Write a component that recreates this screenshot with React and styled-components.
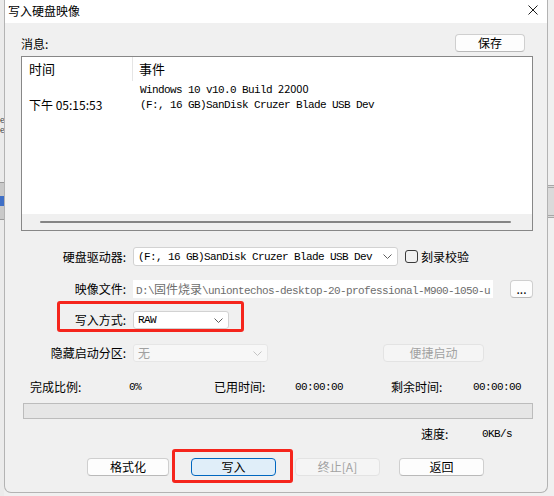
import React from 'react';
import styled, { createGlobalStyle } from 'styled-components';

const GlobalStyle = createGlobalStyle`
    html, body {
        margin: 0;
        padding: 0;
    }
    body {
        background: #f0f0f0;
        font-family: "Noto Sans CJK SC", "Liberation Sans", sans-serif;
        color: #000000;
    }
`;

const MONO = `"Liberation Mono", "Noto Sans CJK SC", monospace`;

const Desktop = styled.div`
    width: 554px;
    height: 496px;
    display: flex;
    overflow: hidden;
    background: #f0f0f0;
`;

const LeftPeek = styled.div`
    width: 4px;
    flex: none;
    background: #ebebeb;
    display: flex;
    flex-direction: column;
    overflow: hidden;
`;

const PeekText = styled.div`
    height: 8px;
    font-size: 8px;
    line-height: 8px;
    color: #333333;
    white-space: nowrap;
    &:first-child {
        margin-top: 116px;
    }
    & + & {
        margin-top: 2px;
    }
`;

const PeekIcon = styled.div`
    margin-top: 48px;
    height: 36px;
    background: #c9c9c9;
    border-top: 1px solid #9a9a9a;
    border-bottom: 1px solid #9a9a9a;
    display: flex;
    align-items: center;

    &::before {
        content: '';
        width: 4px;
        height: 10px;
        background: #3f6fc6;
    }
`;

const RightPeek = styled.div`
    width: 6px;
    flex: none;
    background: #f0f0f0;
    display: flex;
    flex-direction: column;
`;

const PeekBar = styled.div`
    margin-top: 185px;
    height: 33px;
    box-sizing: border-box;
    border-top: 3px double #a7a7a7;
    border-bottom: 3px double #a7a7a7;
    background: #dadada;
`;

const Window = styled.div`
    width: 544px;
    height: 493px;
    flex: none;
    box-sizing: border-box;
    border: 1px solid #b3b3b3;
    border-top: none;
    border-radius: 0 0 7px 7px;
    background: #f0f0f0;
    display: flex;
    flex-direction: column;
    overflow: hidden;
`;

const TitleBar = styled.div`
    height: 23px;
    flex: none;
    background: #ffffff;
    display: flex;
    align-items: flex-start;
    justify-content: space-between;
    padding: 2px 9px 0 3px;
    box-sizing: border-box;
`;

const Title = styled.div`
    font-size: 12px;
    line-height: 17px;
`;

const CloseIcon = styled.div`
    margin-top: 3px;
    width: 10px;
    height: 10px;
    display: flex;
`;

const Body = styled.div`
    flex: 1;
    display: flex;
    flex-direction: column;
    padding: 11px 14px 0 16px;
`;

const Toolbar = styled.div`
    height: 18px;
    display: flex;
    align-items: flex-end;
    justify-content: space-between;
`;

const Caption = styled.div`
    font-size: 12px;
    line-height: 16px;
`;

const Button = styled.div`
    width: ${p => p.$w}px;
    height: 18px;
    flex: none;
    box-sizing: border-box;
    display: flex;
    align-items: center;
    justify-content: center;
    font-size: 12px;
    line-height: 16px;
    border-radius: 4px;
    border: 1px solid ${p => (p.$primary ? '#0067c0' : p.$disabled ? '#e3e3e3' : '#cfcfcf')};
    border-bottom-color: ${p => (p.$primary ? '#0067c0' : p.$disabled ? '#e3e3e3' : '#b9b9b9')};
    background: ${p => (p.$primary ? '#e0eef9' : p.$disabled ? '#f5f5f5' : '#fdfdfd')};
    color: ${p => (p.$disabled ? '#a2a2a2' : '#000000')};
    margin-left: ${p => p.$ml || 0}px;
    margin-right: ${p => p.$mr || 0}px;
`;

const LogList = styled.div`
    margin-top: 4px;
    height: 175px;
    flex: none;
    box-sizing: border-box;
    border: 1px solid #878787;
    background: #ffffff;
    display: flex;
    flex-direction: column;
`;

const LogHeader = styled.div`
    height: 24px;
    display: flex;
`;

const HeadCell = styled.div`
    box-sizing: border-box;
    width: ${p => (p.$w ? `${p.$w}px` : 'auto')};
    flex: ${p => (p.$w ? 'none' : '1')};
    padding-left: ${p => (p.$w ? 7 : 6)}px;
    border-right: ${p => (p.$w ? '1px solid #e5e5e5' : 'none')};
    font-size: 13px;
    line-height: 24px;
`;

const LogRows = styled.div`
    flex: 1;
`;

const LogRow = styled.div`
    height: 16px;
    display: flex;
    align-items: center;
`;

const TimeCell = styled.div`
    width: 111px;
    flex: none;
    box-sizing: border-box;
    padding-left: 7px;
    font-size: 12px;
    line-height: 16px;
`;

const EventCell = styled.div`
    padding-left: 7px;
    font-family: ${MONO};
    font-size: 11px;
    letter-spacing: -0.6px;
    line-height: 16px;
    white-space: nowrap;
`;

const SansNum = styled.span`
    font-family: "Noto Sans CJK SC", sans-serif;
    font-size: 11px;
    letter-spacing: 0;
`;

const HScroll = styled.div`
    height: 16px;
    flex: none;
    background: #f0f0f0;
    display: flex;
    align-items: center;
`;

const Thumb = styled.div`
    margin-left: 18px;
    width: 471px;
    height: 2px;
    border-radius: 1px;
    background: #858585;
`;

const FormRow = styled.div`
    margin-top: ${p => p.$mt}px;
    height: ${p => p.$h || 18}px;
    flex: none;
    display: flex;
    align-items: center;
`;

const FieldLabel = styled.div`
    width: 105px;
    flex: none;
    margin-right: 7px;
    text-align: right;
    font-size: 12px;
    line-height: 16px;
    white-space: nowrap;
`;

const Combo = styled.div`
    width: ${p => p.$w}px;
    height: 100%;
    flex: none;
    box-sizing: border-box;
    border: 1px solid ${p => (p.$disabled ? '#e6e6e6' : '#d2d2d2')};
    border-radius: 3px;
    background: ${p => (p.$disabled ? '#f7f7f7' : '#ffffff')};
    display: flex;
    align-items: center;
    justify-content: space-between;
    padding: 0 5px 0 4px;
`;

const ComboText = styled.span`
    font-family: ${p => (p.$cjk ? '"Noto Sans CJK SC", sans-serif' : MONO)};
    font-size: ${p => (p.$cjk ? 12 : 11)}px;
    letter-spacing: ${p => (p.$cjk ? 0 : -0.6)}px;
    line-height: 16px;
    color: ${p => (p.$disabled ? '#a0a0a0' : '#000000')};
    white-space: nowrap;
`;

const CheckBox = styled.div`
    width: 13px;
    height: 13px;
    flex: none;
    box-sizing: border-box;
    margin-left: 7px;
    border: 1px solid #3a3a3a;
    border-radius: 3px;
`;

const CheckLabel = styled.div`
    margin-left: 3px;
    font-size: 12px;
    line-height: 16px;
`;

const PathField = styled.div`
    width: 360px;
    height: 100%;
    flex: none;
    box-sizing: border-box;
    background: #ffffff;
    padding-left: 3px;
    overflow: hidden;
    white-space: nowrap;
    font-family: ${MONO};
    font-size: 11px;
    letter-spacing: -0.6px;
    line-height: 18px;
    color: #6d6d6d;
`;

const CjkRun = styled.span`
    font-family: "Noto Sans CJK SC", sans-serif;
    font-size: 12px;
    letter-spacing: 0;
`;

const Highlight = styled.div`
    position: relative;
    display: flex;
    align-items: center;
    height: 100%;
    margin-left: ${p => p.$ml || 0}px;

    &::after {
        content: '';
        position: absolute;
        top: ${p => p.$box[0]}px;
        right: ${p => p.$box[1]}px;
        bottom: ${p => p.$box[2]}px;
        left: ${p => p.$box[3]}px;
        border: 3px solid #f5251c;
        border-radius: 3px;
        pointer-events: none;
    }
`;

const StatsRow = styled.div`
    margin-top: 17px;
    margin-left: 9px;
    height: 16px;
    display: grid;
    grid-template-columns: 99px 85px 81px 96px 82px auto;
    align-items: center;
`;

const StatLabel = styled.div`
    font-size: 12px;
    line-height: 16px;
`;

const StatValue = styled.div`
    font-family: ${MONO};
    font-size: 11px;
    letter-spacing: -0.6px;
    line-height: 16px;
`;

const Progress = styled.div`
    margin-top: 8px;
    margin-left: 2px;
    width: 510px;
    height: 16px;
    box-sizing: border-box;
    border: 1px solid #bcbcbc;
    background: #e6e6e6;
`;

const SpeedRow = styled.div`
    margin-top: 8px;
    height: 14px;
    display: flex;
    align-items: center;
    justify-content: flex-end;
    padding-right: 21px;
`;

const SpeedLabel = styled(StatLabel)`
    width: 61px;
`;

const ButtonRow = styled.div`
    margin-top: 17px;
    height: 18px;
    display: flex;
    gap: 19px;
    padding-left: 66px;
`;

const Chevron = ({ color = '#5f5f5f' }) => (
    <svg width="9" height="5" viewBox="0 0 9 5">
        <path d="M0.5 0.5 L4.5 4.5 L8.5 0.5" fill="none" stroke={color} strokeWidth="1" />
    </svg>
);

const logRows = [
    { time: '', event: <>Windows 10 v10.0 Build <SansNum>22000</SansNum></> },
    { time: '下午 05:15:53', event: '(F:, 16 GB)SanDisk Cruzer Blade USB Dev' },
];

const App = () => {
    return (
        <Desktop>
            <GlobalStyle />
            <LeftPeek>
                <PeekText>e:</PeekText>
                <PeekText>e:</PeekText>
                <PeekIcon />
            </LeftPeek>
            <Window>
                <TitleBar>
                    <Title>写入硬盘映像</Title>
                    <CloseIcon>
                        <svg width="10" height="10" viewBox="0 0 10 10">
                            <path d="M0.5 0.5 L9.5 9.5 M9.5 0.5 L0.5 9.5" stroke="#1c1c1c" strokeWidth="1" />
                        </svg>
                    </CloseIcon>
                </TitleBar>
                <Body>
                    <Toolbar>
                        <Caption>消息:</Caption>
                        <Button $w={70} $mr={8}>保存</Button>
                    </Toolbar>
                    <LogList>
                        <LogHeader>
                            <HeadCell $w={111}>时间</HeadCell>
                            <HeadCell>事件</HeadCell>
                        </LogHeader>
                        <LogRows>
                            {logRows.map((r, i) => (
                                <LogRow key={i}>
                                    <TimeCell>{r.time}</TimeCell>
                                    <EventCell>{r.event}</EventCell>
                                </LogRow>
                            ))}
                        </LogRows>
                        <HScroll>
                            <Thumb />
                        </HScroll>
                    </LogList>

                    <FormRow $mt={16} $h={19}>
                        <FieldLabel>硬盘驱动器:</FieldLabel>
                        <Combo $w={265}>
                            <ComboText>(F:, 16 GB)SanDisk Cruzer Blade USB Dev</ComboText>
                            <Chevron />
                        </Combo>
                        <CheckBox />
                        <CheckLabel>刻录校验</CheckLabel>
                    </FormRow>

                    <FormRow $mt={14}>
                        <FieldLabel>映像文件:</FieldLabel>
                        <PathField>
                            D:\<CjkRun>固件烧录</CjkRun>\uniontechos-desktop-20-professional-M900-1050-u
                        </PathField>
                        <Button $w={23} $ml={17}>...</Button>
                    </FormRow>

                    <FormRow $mt={13}>
                        <Highlight $box={[-10, -15, -3, 36]}>
                            <FieldLabel>写入方式:</FieldLabel>
                            <Combo $w={96}>
                                <ComboText>RAW</ComboText>
                                <Chevron />
                            </Combo>
                        </Highlight>
                    </FormRow>

                    <FormRow $mt={15}>
                        <FieldLabel>隐藏启动分区:</FieldLabel>
                        <Combo $w={135} $disabled>
                            <ComboText $cjk $disabled>无</ComboText>
                            <Chevron color="#c4c4c4" />
                        </Combo>
                        <Button $w={101} $ml={115} $disabled>便捷启动</Button>
                    </FormRow>

                    <StatsRow>
                        <StatLabel>完成比例:</StatLabel>
                        <StatValue>0%</StatValue>
                        <StatLabel>已用时间:</StatLabel>
                        <StatValue>00:00:00</StatValue>
                        <StatLabel>剩余时间:</StatLabel>
                        <StatValue>00:00:00</StatValue>
                    </StatsRow>

                    <Progress />

                    <SpeedRow>
                        <SpeedLabel>速度:</SpeedLabel>
                        <StatValue>0KB/s</StatValue>
                    </SpeedRow>

                    <ButtonRow>
                        <Button $w={82}>格式化</Button>
                        <Highlight $ml={3} $box={[-9, -17, -7, -19]}>
                            <Button $w={85} $primary>写入</Button>
                        </Highlight>
                        <Button $w={85} $disabled>终止[A]</Button>
                        <Button $w={85}>返回</Button>
                    </ButtonRow>
                </Body>
            </Window>
            <RightPeek>
                <PeekBar />
            </RightPeek>
        </Desktop>
    );
};

export default App;
